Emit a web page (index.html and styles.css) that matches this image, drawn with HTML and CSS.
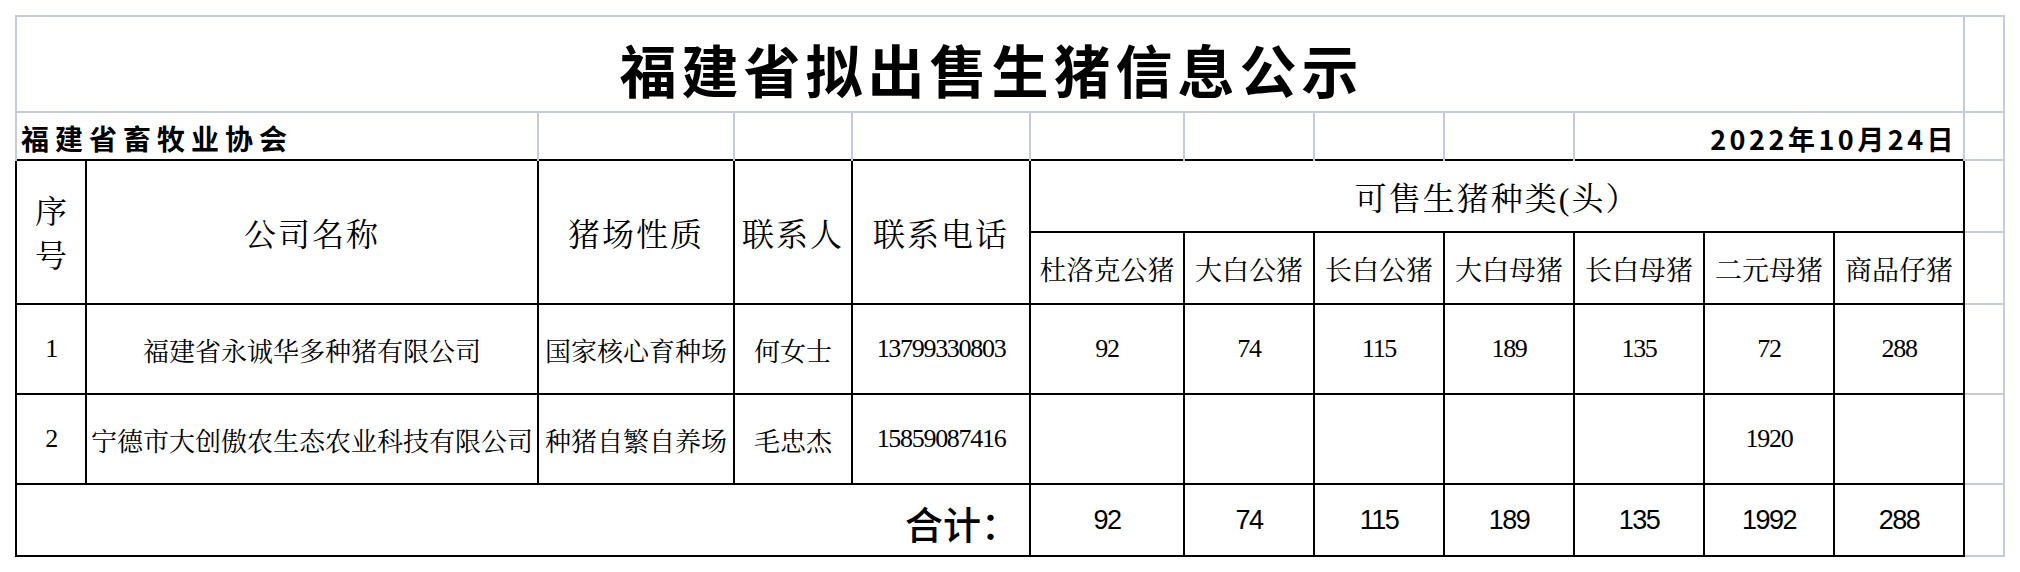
FILE: index.html
```html
<!DOCTYPE html>
<html lang="zh-CN">
<head>
<meta charset="utf-8">
<title>福建省拟出售生猪信息公示</title>
<link rel="stylesheet" href="styles.css">
</head>
<body>
<div class="sheet">
<table class="grid">
  <colgroup>
    <col class="c-no"><col class="c-name"><col class="c-type"><col class="c-person"><col class="c-phone">
    <col class="c-first"><col class="c-kind"><col class="c-kind"><col class="c-kind"><col class="c-kind"><col class="c-kind"><col class="c-kind">
    <col class="c-extra">
  </colgroup>
  <tr class="r-title">
    <td colspan="12" class="g title">福建省拟出售生猪信息公示</td>
    <td class="g"></td>
  </tr>
  <tr class="r-sub">
    <td colspan="2" class="s org">福建省畜牧业协会</td>
    <td class="s"></td><td class="s"></td><td class="s"></td><td class="s"></td><td class="s"></td><td class="s"></td><td class="s"></td>
    <td colspan="3" class="s date">2022年10月24日</td>
    <td class="g"></td>
  </tr>
  <tr class="r-head">
    <td rowspan="2" class="b head stack">序<br>号</td>
    <td rowspan="2" class="b head">公司名称</td>
    <td rowspan="2" class="b head">猪场性质</td>
    <td rowspan="2" class="b head">联系人</td>
    <td rowspan="2" class="b head">联系电话</td>
    <td colspan="7" class="b head">可售生猪种类(头）</td>
    <td class="x"></td>
  </tr>
  <tr class="r-head">
    <td class="b kind">杜洛克公猪</td>
    <td class="b kind">大白公猪</td>
    <td class="b kind">长白公猪</td>
    <td class="b kind">大白母猪</td>
    <td class="b kind">长白母猪</td>
    <td class="b kind">二元母猪</td>
    <td class="b kind">商品仔猪</td>
    <td class="x"></td>
  </tr>
  <tr class="r-data">
    <td class="b num">1</td>
    <td class="b cell">福建省永诚华多种猪有限公司</td>
    <td class="b cell">国家核心育种场</td>
    <td class="b cell">何女士</td>
    <td class="b num">13799330803</td>
    <td class="b num">92</td>
    <td class="b num">74</td>
    <td class="b num">115</td>
    <td class="b num">189</td>
    <td class="b num">135</td>
    <td class="b num">72</td>
    <td class="b num">288</td>
    <td class="x"></td>
  </tr>
  <tr class="r-data">
    <td class="b num">2</td>
    <td class="b cell">宁德市大创傲农生态农业科技有限公司</td>
    <td class="b cell">种猪自繁自养场</td>
    <td class="b cell">毛忠杰</td>
    <td class="b num">15859087416</td>
    <td class="b num"></td>
    <td class="b num"></td>
    <td class="b num"></td>
    <td class="b num"></td>
    <td class="b num"></td>
    <td class="b num">1920</td>
    <td class="b num"></td>
    <td class="x"></td>
  </tr>
  <tr class="r-total">
    <td colspan="5" class="b label">合计：</td>
    <td class="b sum">92</td>
    <td class="b sum">74</td>
    <td class="b sum">115</td>
    <td class="b sum">189</td>
    <td class="b sum">135</td>
    <td class="b sum">1992</td>
    <td class="b sum">288</td>
    <td class="x"></td>
  </tr>
</table>
</div>
</body>
</html>
```

FILE: styles.css
```css
html, body {
  margin: 0;
  background: #ffffff;
  color: #000000;
}

body {
  font-family: "Liberation Serif", "Noto Serif CJK SC", "Noto Sans CJK SC", serif;
}

.sheet {
  padding: 15px 0 0 15px;
}

.grid {
  border-collapse: collapse;
  table-layout: fixed;
  width: 1990px;
}

.c-no { width: 70px; }
.c-name { width: 452px; }
.c-type { width: 196px; }
.c-person { width: 118px; }
.c-phone { width: 178px; }
.c-first { width: 154px; }
.c-kind { width: 130px; }
.c-extra { width: 40px; }

.grid td {
  padding: 0;
  text-align: center;
  vertical-align: middle;
  white-space: nowrap;
  overflow: visible;
}

.r-title { height: 96px; }
.r-sub { height: 48px; }
.r-head { height: 72px; }
.r-data { height: 90px; }
.r-total { height: 72px; }

.grid .g {
  border: 2px solid #c6cbdb;
}

.grid .s {
  border-top: 2px solid #c6cbdb;
  border-left: 2px solid #c6cbdb;
  border-right: 2px solid #c6cbdb;
  border-bottom: none;
}

.grid .x {
  border-top: 2px solid #c6cbdb;
  border-right: 2px solid #c6cbdb;
  border-bottom: 2px solid #c6cbdb;
  border-left: none;
}

.grid .b {
  border: 2px solid #000000;
}

.grid .title {
  font-family: "Noto Sans CJK SC", sans-serif;
  font-weight: 700;
  font-size: 57px;
  letter-spacing: 5px;
  padding-top: 8px;
  padding-left: 3px;
}

.grid .org {
  font-family: "Noto Sans CJK SC", sans-serif;
  font-weight: 700;
  font-size: 28px;
  letter-spacing: 6px;
  text-align: left;
  padding: 4px 0 0 4px;
}

.grid .date {
  font-family: "Noto Sans CJK SC", sans-serif;
  font-weight: 700;
  font-size: 27px;
  letter-spacing: 3.5px;
  text-align: right;
  padding: 4px 6px 0 0;
}

.grid .head {
  font-size: 32px;
  letter-spacing: 2px;
}

.grid .stack {
  letter-spacing: 0;
  line-height: 44px;
  padding-top: 4px;
}

.grid .kind {
  font-size: 27px;
}

.grid .cell {
  font-size: 26px;
}

.grid .num {
  font-size: 26px;
  letter-spacing: -1.3px;
}

.grid .label {
  font-family: "Noto Sans CJK SC", sans-serif;
  font-weight: 500;
  font-size: 38px;
  text-align: right;
  padding: 4px 10px 0 0;
}

.grid .sum {
  font-family: "Liberation Sans", "Noto Sans CJK SC", sans-serif;
  font-size: 27px;
  letter-spacing: -1.5px;
}
```
